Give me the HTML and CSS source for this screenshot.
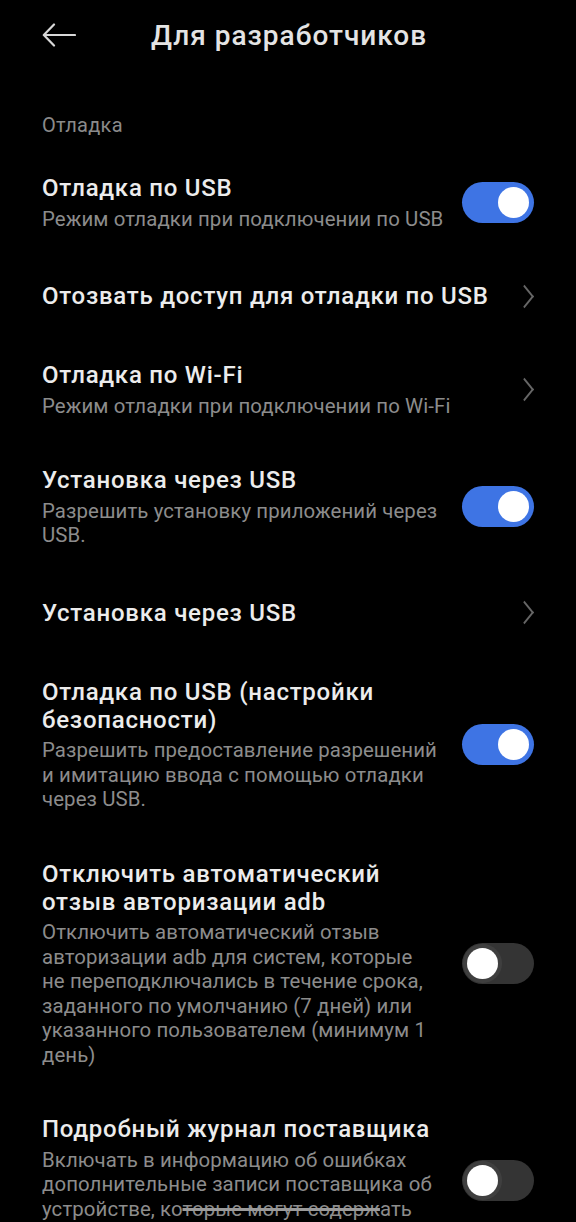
FILE: index.html
```html
<!DOCTYPE html>
<html lang="ru">

<head>
    <meta charset="UTF-8">
    <meta name="viewport" content="width=device-width, initial-scale=1.0">
    <title>Для разработчиков</title>
    <link rel="stylesheet" href="styles.css">
</head>

<body>
    <div class="top-bar">
        <svg class="back-icon" width="34" height="24" viewBox="0 0 34 24">
            <path d="M33 12H2M12 1.5L1.8 12L12 22.5" fill="none" stroke="#d8d8d8" stroke-width="2.2" stroke-linecap="round" stroke-linejoin="round"/>
        </svg>
        <h1 class="page-title">Для разработчиков</h1>
    </div>

    <div class="section-label">Отладка</div>

    <div class="settings-list">
        <div class="row">
            <div class="row-text">
                <div class="row-title">Отладка по USB</div>
                <div class="row-sub">Режим отладки при подключении по USB</div>
            </div>
            <div class="switch on"><span class="knob"></span></div>
        </div>

        <div class="row single">
            <div class="row-text">
                <div class="row-title">Отозвать доступ для отладки по USB</div>
            </div>
            <span class="chevron"></span>
        </div>

        <div class="row">
            <div class="row-text">
                <div class="row-title">Отладка по Wi-Fi</div>
                <div class="row-sub">Режим отладки при подключении по Wi-Fi</div>
            </div>
            <span class="chevron"></span>
        </div>

        <div class="row">
            <div class="row-text">
                <div class="row-title">Установка через USB</div>
                <div class="row-sub">Разрешить установку приложений через USB.</div>
            </div>
            <div class="switch on"><span class="knob"></span></div>
        </div>

        <div class="row single">
            <div class="row-text">
                <div class="row-title">Установка через USB</div>
            </div>
            <span class="chevron"></span>
        </div>

        <div class="row">
            <div class="row-text">
                <div class="row-title">Отладка по USB (настройки безопасности)</div>
                <div class="row-sub">Разрешить предоставление разрешений и имитацию ввода с помощью отладки через USB.</div>
            </div>
            <div class="switch on"><span class="knob"></span></div>
        </div>

        <div class="row">
            <div class="row-text">
                <div class="row-title">Отключить автоматический отзыв авторизации adb</div>
                <div class="row-sub">Отключить автоматический отзыв авторизации adb для систем, которые не&nbsp;переподключались в течение срока, заданного по умолчанию (7 дней) или указанного пользователем (минимум 1 день)</div>
            </div>
            <div class="switch"><span class="knob"></span></div>
        </div>

        <div class="row">
            <div class="row-text">
                <div class="row-title">Подробный журнал поставщика</div>
                <div class="row-sub">Включать в информацию об ошибках дополнительные записи поставщика об устройстве, ко<span class="strike">торые могут содерж</span>ать личную информацию</div>
            </div>
            <div class="switch"><span class="knob"></span></div>
        </div>
    </div>
</body>

</html>
```

FILE: styles.css
```css
body,
html {
    margin: 0;
    padding: 0;
    background: #000000;
    font-family: Roboto, 'Noto Sans', sans-serif;
    color: #e8e8e8;
    overflow: hidden;
}

.top-bar {
    height: 72px;
    display: flex;
    align-items: center;
    padding-left: 42px;
}

.back-icon {
    display: block;
    margin-top: -2px;
}

.page-title {
    margin: -1px 0 0 75px;
    font-size: 28px;
    font-weight: 500;
    letter-spacing: 1px;
    color: #e4e4e4;
    line-height: 1;
}

.section-label {
    margin: 41px 0 0 42px;
    font-size: 20px;
    letter-spacing: 0.3px;
    line-height: 24px;
    color: #8a8a8a;
}

.settings-list {
    margin-top: 13px;
}

.row {
    display: flex;
    align-items: center;
    padding: 24px 42px;
}

.row.single {
    min-height: 34px;
}

.row-text {
    flex: 1;
    min-width: 0;
}

.row-title {
    font-size: 24px;
    font-weight: 500;
    letter-spacing: 0.75px;
    line-height: 28px;
    color: #ececec;
}

.row-sub {
    margin-top: 4.5px;
    font-size: 20.4px;
    letter-spacing: 0.1px;
    line-height: 24.5px;
    color: #8c8c8c;
}

.strike {
    text-decoration: line-through;
    text-decoration-color: #9a9a9a;
    text-decoration-thickness: 3px;
}

.switch {
    flex: none;
    width: 72px;
    height: 41px;
    margin-left: 14px;
    border-radius: 21px;
    background: #343434;
    position: relative;
}

.switch.on {
    background: #3e74e4;
}

.knob {
    position: absolute;
    top: 5px;
    left: 5px;
    width: 31px;
    height: 31px;
    border-radius: 50%;
    background: #ffffff;
    box-shadow: 0 0 0 4px rgba(255, 255, 255, 0.06);
}

.switch.on .knob {
    left: auto;
    right: 5px;
    box-shadow: none;
}

.chevron {
    flex: none;
    width: 13px;
    height: 13px;
    margin: 0 2px 0 14px;
    border-top: 2px solid #666666;
    border-right: 2px solid #666666;
    transform: rotate(45deg) skew(6deg, 6deg);
}
```
